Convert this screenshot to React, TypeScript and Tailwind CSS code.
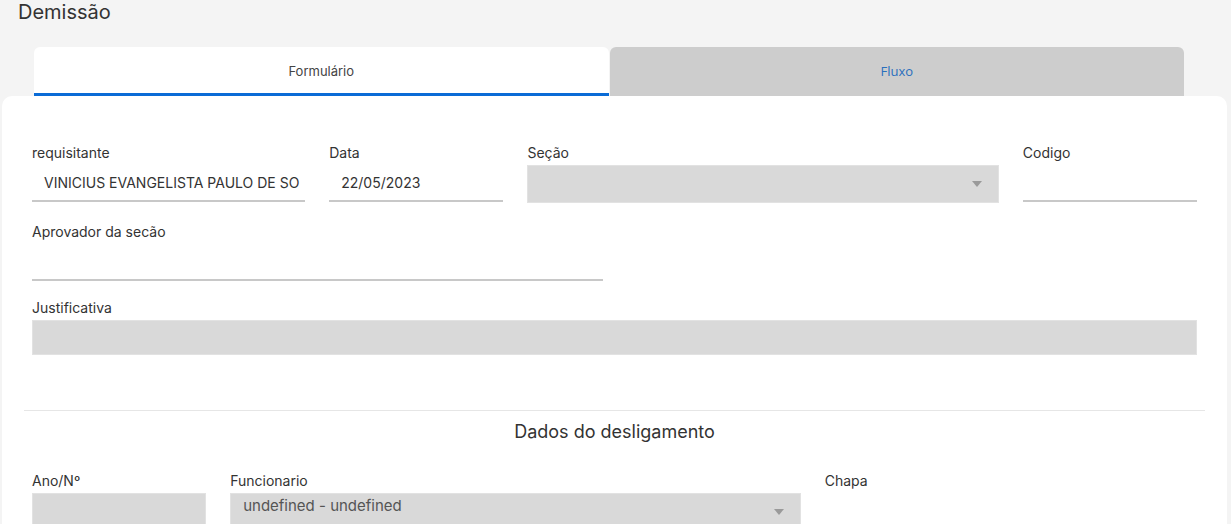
import React from "react";

const font = { fontFamily: "Inter, 'Noto Sans', sans-serif" };

function Caret() {
  return (
    <svg width="10" height="6" viewBox="0 0 10 6" className="shrink-0">
      <path d="M0 0 L10 0 L5 6 Z" fill="#9a9a9a" />
    </svg>
  );
}

function Label({ children }: { children: React.ReactNode }) {
  return <div className="h-5 text-[14px] leading-5 text-[#333]">{children}</div>;
}

function LineInput({ label, value, span }: { label: string; value?: string; span: string }) {
  return (
    <div className={span}>
      <Label>{label}</Label>
      <div className="mt-0.5 h-[37px] border-b-2 border-[#c8c8c8] px-3 flex items-center text-[14px] text-[#333] whitespace-nowrap overflow-hidden">
        {value}
      </div>
    </div>
  );
}

function GrayBox({ label, value, span, caret, h = "h-[38px]" }: { label: string; value?: string; span: string; caret?: boolean; h?: string }) {
  return (
    <div className={span}>
      <Label>{label}</Label>
      <div className={`relative mt-0.5 ${h} bg-[#d9d9d9] border border-[#e2e2e2] pl-3.5 pr-4 flex items-center justify-end`}>
        {value && (
          <span className="absolute left-3 top-[2px] text-[15px] leading-5 text-[#555]">{value}</span>
        )}
        {caret && <Caret />}
      </div>
    </div>
  );
}

export default function App() {
  return (
    <div className="min-h-screen bg-[#f4f4f4] overflow-hidden" style={font}>
      <h1 className="pl-[18px] pt-0 h-[47px] text-[20px] leading-6 text-[#333]">Demissão</h1>

      {/* Tabs */}
      <div className="flex ml-[34px] mr-[47px] h-[49px]">
        <div className="flex-1 bg-white rounded-t-md border-b-[3px] border-[#0a6bd6] pt-1 flex items-center justify-center text-[13px] text-[#444]">
          Formulário
        </div>
        <div
          className="flex-1 bg-[#cdcdcd] rounded-t-md flex items-center justify-center text-[13px] text-[#2a6fbd] ml-px"
          style={{ fontFamily: "'Open Sans', sans-serif" }}
        >
          Fluxo
        </div>
      </div>

      {/* Card */}
      <div className="ml-[2px] mr-[4px] bg-white rounded-[10px] pt-[47px] pb-10">
        <div className="px-[30px] grid grid-cols-12 gap-x-6">
          <LineInput label="requisitante" value="VINICIUS EVANGELISTA PAULO DE SO" span="col-span-3" />
          <LineInput label="Data" value="22/05/2023" span="col-span-2" />
          <GrayBox label="Seção" span="col-span-5" caret />
          <LineInput label="Codigo" span="col-span-2" />

          <div className="col-span-12 h-[19px]" />
          <LineInput label="Aprovador da secão" span="col-span-6" />

          <div className="col-span-12 h-[17px]" />
          <GrayBox label="Justificativa" span="col-span-12" h="h-[35px]" />
        </div>

        <div className="mx-[22px] mt-[55px] border-t border-[#e6e6e6]" />
        <div className="pt-[9px] text-center text-[18px] leading-6 text-[#333]">Dados do desligamento</div>

        <div className="mt-[27px] px-[30px] grid grid-cols-12 gap-x-6">
          <GrayBox label="Ano/Nº" span="col-span-2" h="h-[38px]" />
          <GrayBox label="Funcionario" value="undefined - undefined" span="col-span-6" caret h="h-[38px]" />
          <div className="col-span-2">
            <Label>Chapa</Label>
          </div>
        </div>
      </div>
    </div>
  );
}
